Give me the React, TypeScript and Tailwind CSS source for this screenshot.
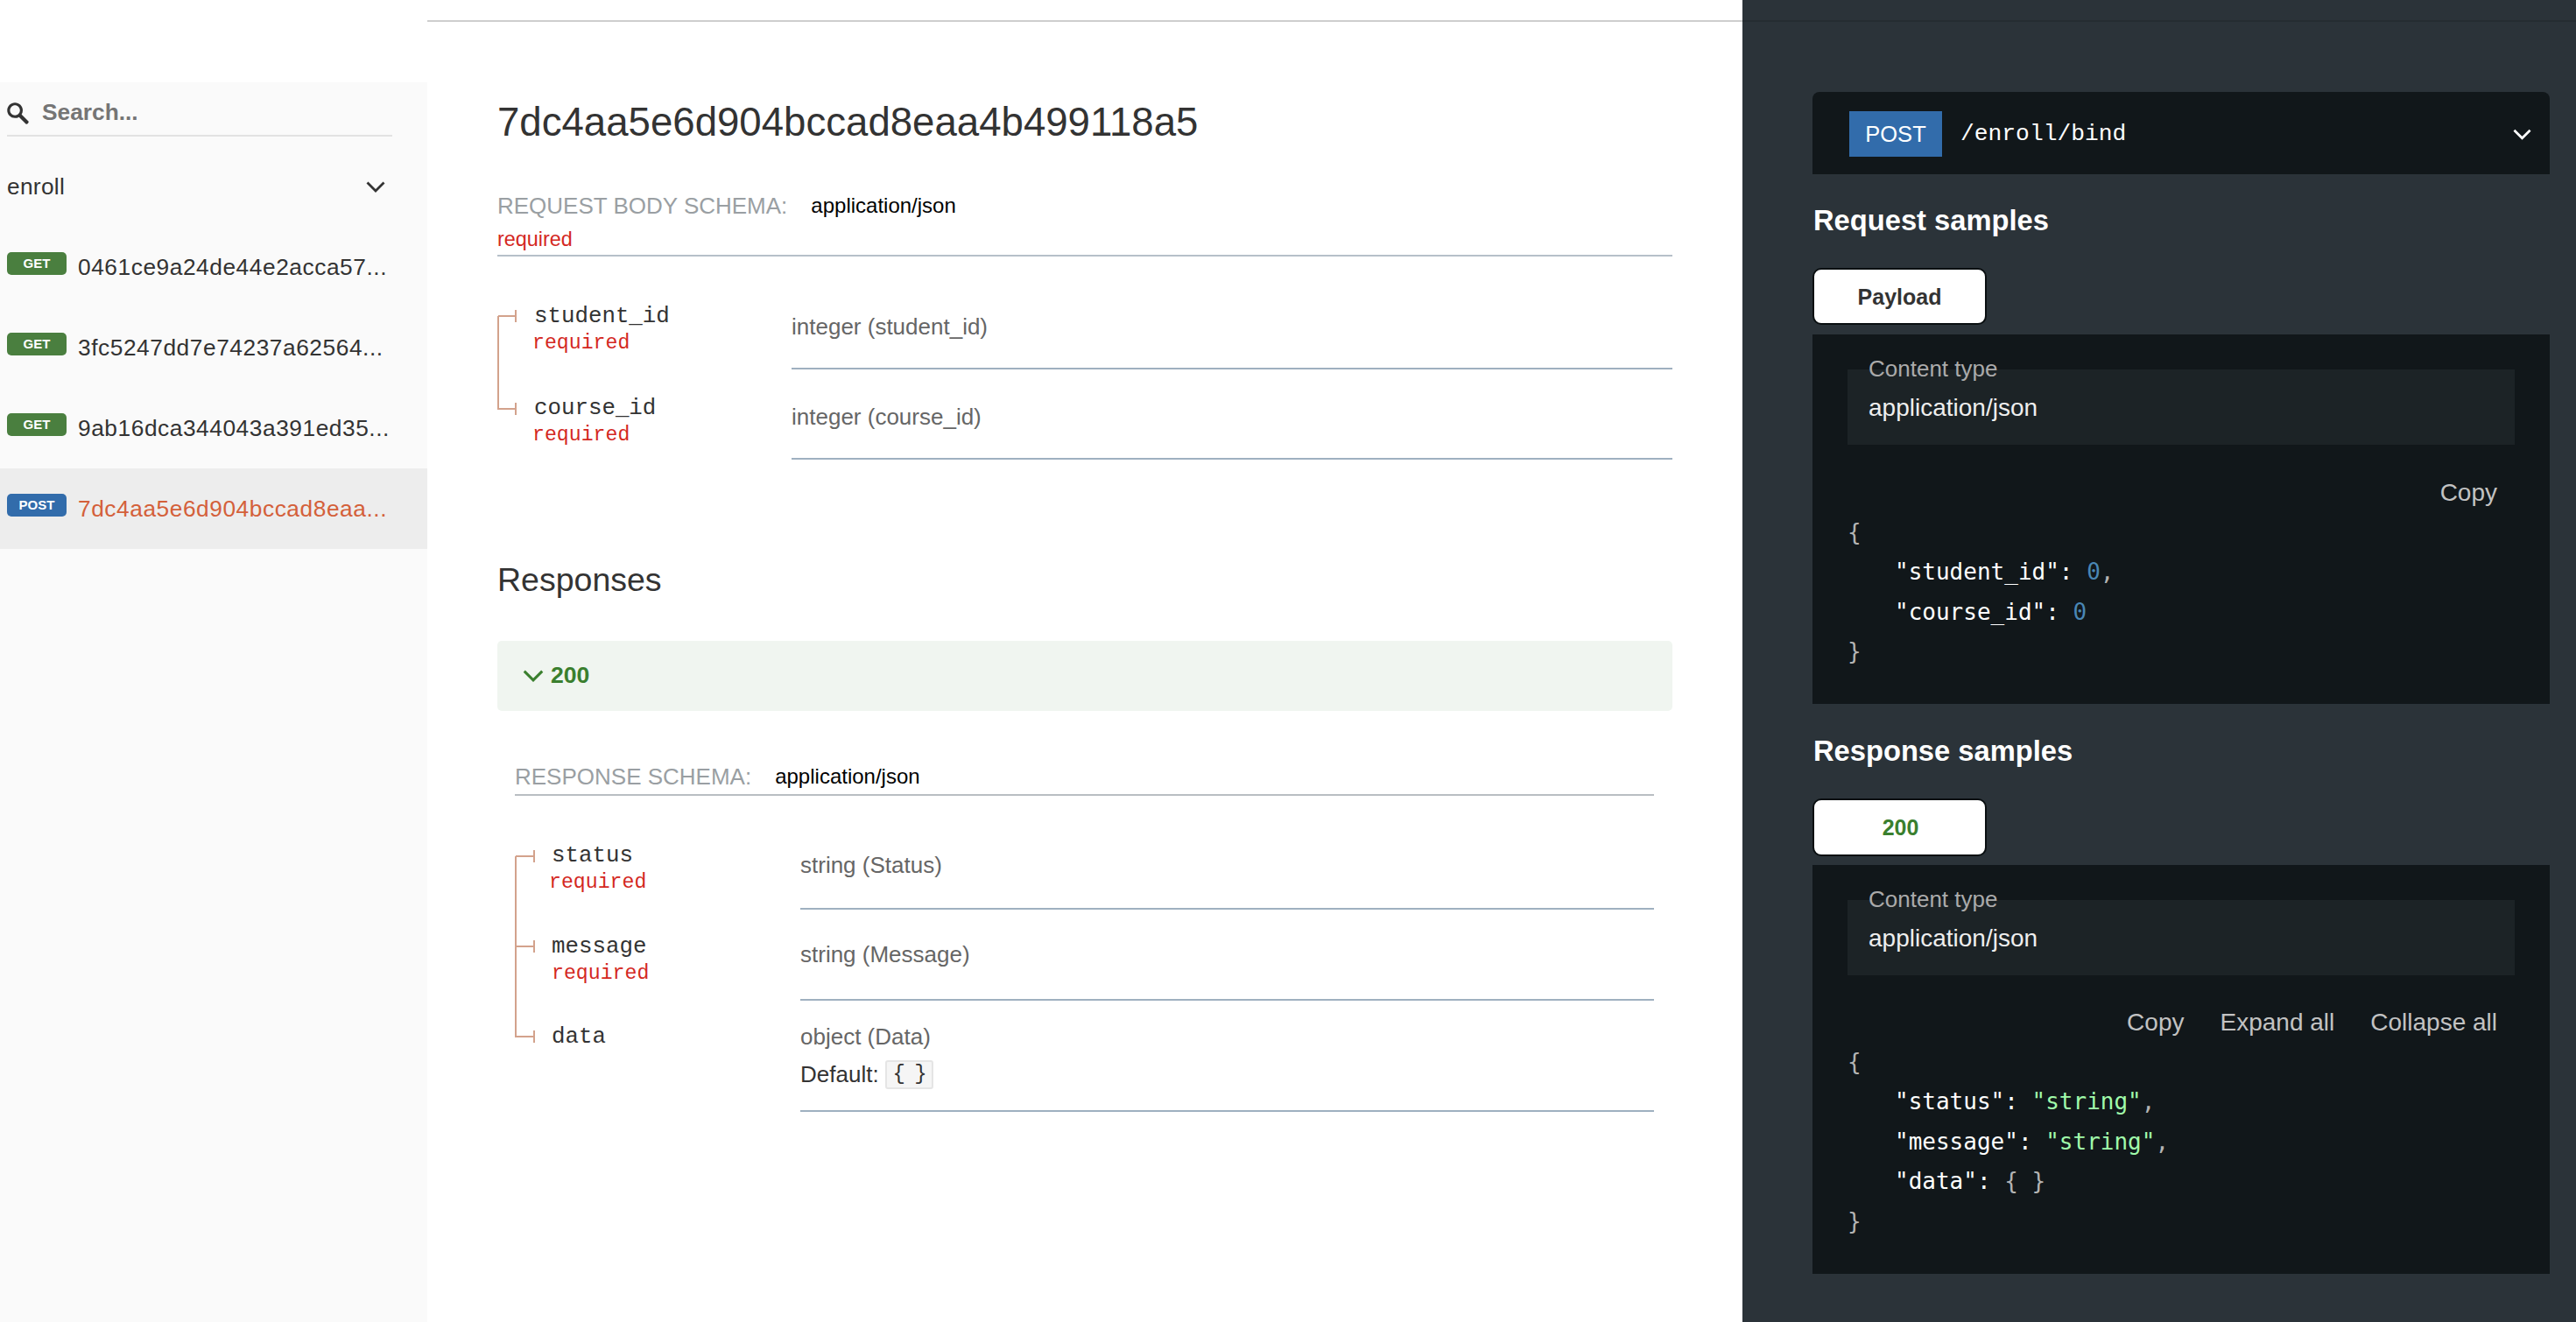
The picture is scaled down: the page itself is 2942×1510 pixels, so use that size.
import React from "react";

const SANS = "font-['Liberation_Sans',Arial,sans-serif]";

function Chevron({ className, stroke, width = 2.8 }: { className: string; stroke: string; width?: number }) {
  return (
    <svg viewBox="0 0 22 13" className={className} fill="none">
      <polyline points="1.5,1.5 11,11 20.5,1.5" stroke={stroke} strokeWidth={width} />
    </svg>
  );
}

function NavRow({ method, text, active }: { method: string; text: string; active?: boolean }) {
  return (
    <div className={`h-[92px] flex items-center pl-[8px] ${active ? "bg-[#ededed]" : ""}`}>
      <span className={`w-[68px] h-[26px] mb-[8px] rounded-[5px] flex items-center justify-center text-white text-[15px] font-bold ${method === "GET" ? "bg-[#4a7f3f]" : "bg-[#326cab]"}`}>
        {method}
      </span>
      <span className={`ml-[13px] mt-[1px] whitespace-nowrap text-[26.3px] tracking-[0.55px] ${active ? "text-[#d4603a]" : "text-[#333333]"}`}>{text}</span>
    </div>
  );
}

function Prop({ name, type, h, top, reqClass, typeTop, left, children }: { name: string; type: string; h: string; top: string; reqClass?: string; typeTop: string; left: string; children?: React.ReactNode }) {
  return (
    <div className={`flex ${h}`}>
      <div className={`${left} ${top} pl-[42px] shrink-0 font-['Liberation_Mono',monospace]`}>
        <div className="h-[30px] leading-[30px] text-[25.8px] text-[#333333]">{name}</div>
        {reqClass && <div className={`h-[30px] leading-[30px] text-[23.2px] text-[#d4281f] ${reqClass}`}>required</div>}
      </div>
      <div className={`flex-1 border-b-2 border-[#9fb0c0] ${typeTop}`}>
        <div className="h-[32px] leading-[32px] text-[26px] text-[#666666]">{type}</div>
        {children}
      </div>
    </div>
  );
}

function CodeLine({ children, indent }: { children: React.ReactNode; indent?: boolean }) {
  return <div className={`h-[45.4px] leading-[45.4px] whitespace-pre ${indent ? "pl-[54px]" : ""}`}>{children}</div>;
}

function ContentType() {
  return (
    <div className="relative h-[86px] bg-[#1c2326] pl-[24px] pt-[26px]">
      <div className="absolute left-[24px] -top-[17px] h-[32px] leading-[32px] text-[26px] text-[#aaaaaa]">Content type</div>
      <div className="h-[36px] leading-[36px] text-[28px] text-[#eeeeee]">application/json</div>
    </div>
  );
}

export default function App() {
  return (
    <div className={`flex h-[1510px] w-[2942px] overflow-hidden bg-white ${SANS}`}>
      <aside className="w-[488px] shrink-0 pt-[94px] flex flex-col">
        <div className="flex-1 bg-[#fafafa]">
          <div className="w-[440px] ml-[8px] h-[62px] border-b-2 border-[#e2e2e2] flex items-center">
            <svg viewBox="0 0 1000 1000" className="w-[25px] h-[25px] mt-[11px]" fill="#333333">
              <path d="M968.2,849.4L667.3,549c83.9-136.5,66.7-317.4-51.7-435.6C477.1-25,252.5-25,113.9,113.4c-138.5,138.3-138.5,362.6,0,501C219.2,730.1,413.2,743,547.6,666.5l301.9,301.4c43.6,43.6,76.9,14.9,104.2-12.4C981,928.3,1011.8,893,968.2,849.4z M524.5,522c-88.9,88.7-233,88.7-321.8,0c-88.9-88.7-88.9-232.6,0-321.3c88.9-88.7,233-88.7,321.8,0C613.4,289.4,613.4,433.3,524.5,522z" />
            </svg>
            <span className="ml-[15px] mt-[10px] text-[26.3px] font-bold text-[#757575]">Search...</span>
          </div>
          <div className="h-[103px] flex items-center pl-[8px] pr-[48px] pt-[12px] justify-between">
            <span className="text-[26.3px] tracking-[0.3px] text-[#333333]">enroll</span>
            <Chevron className="w-[22px] h-[13px]" stroke="#333333" />
          </div>
          <NavRow method="GET" text="0461ce9a24de44e2acca57..." />
          <NavRow method="GET" text="3fc5247dd7e74237a62564..." />
          <NavRow method="GET" text="9ab16dca344043a391ed35..." />
          <NavRow method="POST" text="7dc4aa5e6d904bccad8eaa..." active />
        </div>
      </aside>

      <main className="w-[1502px] shrink-0 mt-[23px] border-t-2 border-[#cecece] px-[80px]">
        <h2 className="mt-[85px] h-[60px] leading-[60px] text-[45.6px] font-normal text-[#333333]">7dc4aa5e6d904bccad8eaa4b499118a5</h2>
        <div className="mt-[45px] h-[40px] flex items-center">
          <span className="text-[26px] text-[#9a9fa3]">REQUEST BODY SCHEMA:</span>
          <span className="ml-[27px] text-[24px] text-black">application/json</span>
        </div>
        <div className="h-[36px] border-b-2 border-[#b6c0c9] box-content">
          <div className="h-[36px] leading-[36px] text-[23.4px] text-[#d4281f]">required</div>
        </div>
        <div className="relative mt-[26px]">
          <svg className="absolute left-0 top-0 w-[24px] h-[160px]" viewBox="0 0 24 160" fill="none" stroke="#d3a28c" strokeWidth="2">
            <path d="M1,42 H21 M21,35 V49 M1,42 V148 H21 M21,141 V155" />
          </svg>
          <Prop name="student_id" type="integer (student_id)" h="h-[103px]" top="pt-[28px]" reqClass="-ml-[2px]" typeTop="pt-[38px]" left="w-[336px]" />
          <Prop name="course_id" type="integer (course_id)" h="h-[103px]" top="pt-[30px]" reqClass="-ml-[2px]" typeTop="pt-[38px]" left="w-[336px]" />
        </div>

        <h3 className="mt-[112px] h-[50px] leading-[50px] text-[37.5px] font-normal text-[#333333]">Responses</h3>
        <div className="mt-[45px] h-[80px] rounded-[5px] bg-[#f0f5f0] flex items-center pl-[29px]">
          <Chevron className="w-[24px] h-[14px]" stroke="#3a7f2e" />
          <span className="ml-[8px] text-[26.6px] font-bold text-[#3a7f2e]">200</span>
        </div>

        <div className="pl-[20px] pr-[21px]">
          <div className="mt-[55px] h-[42px] border-b-2 border-[#b9bec2] flex items-center">
            <span className="text-[26px] text-[#9a9fa3]">RESPONSE SCHEMA:</span>
            <span className="ml-[27px] text-[24px] text-black">application/json</span>
          </div>
          <div className="relative mt-[27px]">
            <svg className="absolute left-0 top-0 w-[24px] h-[270px]" viewBox="0 0 24 270" fill="none" stroke="#d3a28c" strokeWidth="2">
              <path d="M1,42 H22 M22,35 V49 M1,145 H22 M22,138 V152 M1,42 V248 H22 M22,241 V255" />
            </svg>
            <Prop name="status" type="string (Status)" h="h-[103px]" top="pt-[27px]" reqClass="-ml-[3px]" typeTop="pt-[36px]" left="w-[326px]" />
            <Prop name="message" type="string (Message)" h="h-[104px]" top="pt-[28px]" reqClass="ml-0" typeTop="pt-[35px]" left="w-[326px]" />
            <Prop name="data" type="object (Data)" h="h-[127px]" top="pt-[27px]" typeTop="pt-[25px]" left="w-[326px]">
              <div className="mt-[9px] flex items-center h-[36px]">
                <span className="text-[26px] text-[#333333]">Default:</span>
                <span className="ml-[7px] w-[55px] h-[33px] rounded-[3px] border-2 border-[#e5e5e5] bg-[#f5f5f5] flex items-center justify-center font-['Liberation_Mono',monospace] text-[24px] tracking-[-2px] text-[#333333]">{"{ }"}</span>
              </div>
            </Prop>
          </div>
        </div>
      </main>

      <aside className="flex-1 bg-[#2b3339] pt-[23px]">
        <div className="border-t-2 border-[#252c31] pl-[80px] pr-[30px]">
          <div className="mt-[80px] h-[94px] pt-[2px] rounded-t-[8px] bg-[#11171a] flex items-center pl-[42px] pr-[21px]">
            <span className="w-[106px] h-[52px] bg-[#326cab] flex items-center justify-center text-[25.5px] text-white">POST</span>
            <span className="ml-[21px] mt-[2px] flex-1 font-['Liberation_Mono',monospace] text-[26.3px] text-white">/enroll/bind</span>
            <Chevron className="w-[21px] h-[13px]" stroke="#ffffff" width={2.8} />
          </div>

          <div className="mt-[28px] pl-[1px] h-[50px] leading-[50px] text-[32.7px] font-bold text-white">Request samples</div>
          <div className="mt-[29px] w-[199px] h-[65px] pt-[2px] rounded-[10px] border-2 border-[#0a0f11] bg-white flex items-center justify-center text-[25px] font-bold text-[#333333]">Payload</div>
          <div className="mt-[11px] h-[422px] bg-[#11171a] px-[40px] pt-[40px]">
            <ContentType />
            <div className="mt-[35px] h-[40px] flex items-center justify-end pr-[20px] text-[28px] text-[#c2c2c2]">Copy</div>
            <div className="mt-[3px] font-['DejaVu_Sans_Mono',monospace] text-[26px] text-[#b4b4b4]">
              <CodeLine>{"{"}</CodeLine>
              <CodeLine indent><span className="text-white">"student_id"</span><span className="text-white">: </span><span className="text-[#4a87b5]">0</span>,</CodeLine>
              <CodeLine indent><span className="text-white">"course_id"</span><span className="text-white">: </span><span className="text-[#4a87b5]">0</span></CodeLine>
              <CodeLine>{"}"}</CodeLine>
            </div>
          </div>

          <div className="mt-[29px] pl-[1px] h-[50px] leading-[50px] text-[32.7px] font-bold text-white">Response samples</div>
          <div className="mt-[29px] w-[199px] h-[66px] pt-[2px] rounded-[10px] border-2 border-[#0a0f11] bg-white flex items-center justify-center pl-[2px] text-[25px] font-bold text-[#3a7f2e]">200</div>
          <div className="mt-[10px] h-[467px] bg-[#11171a] px-[40px] pt-[40px]">
            <ContentType />
            <div className="mt-[34px] h-[40px] flex items-center justify-end pr-[20px] gap-[41px] text-[28px] text-[#c2c2c2]">
              <span>Copy</span>
              <span>Expand all</span>
              <span>Collapse all</span>
            </div>
            <div className="mt-[3px] font-['DejaVu_Sans_Mono',monospace] text-[26px] text-[#b4b4b4]">
              <CodeLine>{"{"}</CodeLine>
              <CodeLine indent><span className="text-white">"status": </span><span className="text-[#a0fbaa]">"string"</span>,</CodeLine>
              <CodeLine indent><span className="text-white">"message": </span><span className="text-[#a0fbaa]">"string"</span>,</CodeLine>
              <CodeLine indent><span className="text-white">"data": </span>{"{ }"}</CodeLine>
              <CodeLine>{"}"}</CodeLine>
            </div>
          </div>
        </div>
      </aside>
    </div>
  );
}
